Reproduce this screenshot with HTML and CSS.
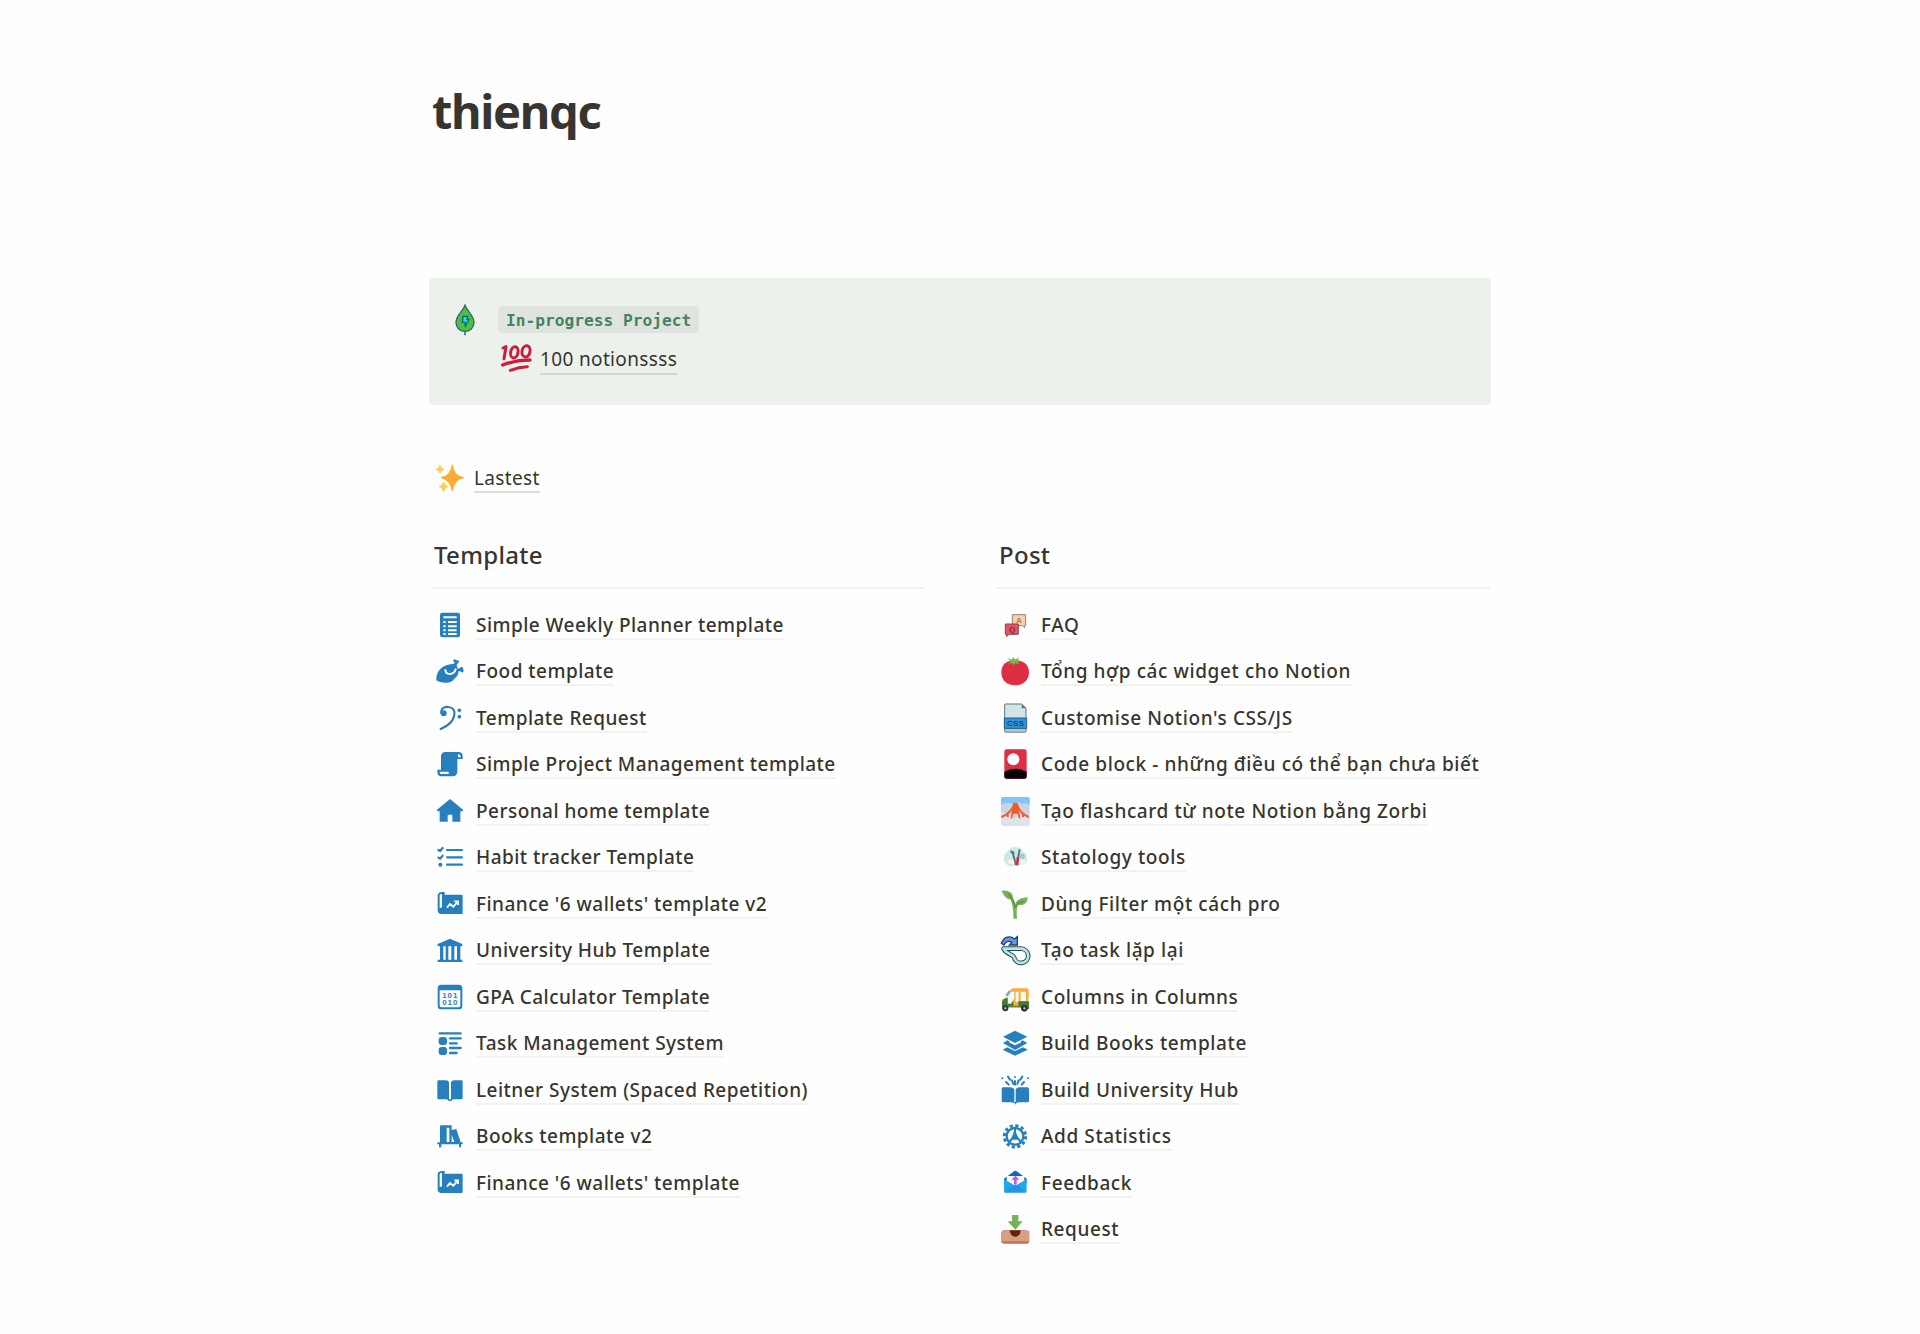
FILE: index.html
```html
<!DOCTYPE html>
<html lang="vi">
<head>
<meta charset="utf-8">
<title>thienqc</title>
<link rel="stylesheet" href="styles.css">
</head>
<body>
<main class="page">
  <h1 class="title">thienqc</h1>

  <section class="callout">
    <svg class="callout-icon" viewBox="0 0 84 96"><path d="M42 80V94" stroke="#3d6f8c" stroke-width="5"/><path d="M42 4C36 22 15 34 15 55C15 72 27 82 42 82S69 72 69 55C69 34 48 22 42 4Z" fill="#4bc13c" stroke="#34667e" stroke-width="4"/><path d="M36 37H50L48 46H54L43 66L42 55H34Z" fill="#1ce5e5" stroke="#17607a" stroke-width="4"/></svg>
    <div class="callout-body">
      <code class="tag">In-progress Project</code>
      <a class="item item-project"><svg class="icon icon-hundred" viewBox="0 0 96 96"><g fill="none" stroke="#c91f3c" stroke-width="9" stroke-linecap="round" stroke-linejoin="round"><path d="M6 15L15 11L9 47"/><ellipse cx="40" cy="28" rx="11" ry="17" transform="rotate(12 40 28)"/><ellipse cx="75" cy="25" rx="12" ry="17" transform="rotate(12 75 25)"/><path d="M5 66Q43 51 87 51" stroke-width="10"/><path d="M28 82Q55 72 79 71" stroke-width="9"/></g></svg><span class="label">100 notionssss</span></a>
    </div>
  </section>

  <a class="item item-latest"><svg class="icon" viewBox="0 0 84 84"><path d="M49 2Q53 36 83 41Q53 47 49 81Q43 47 15 41Q44 36 49 2Z" fill="#ffac33" stroke="#ffac33" stroke-width="3" stroke-linejoin="round"/><path d="M12 4Q14 14 24 16Q14 18 12 28Q10 18 0 16Q10 14 12 4ZM23 54Q26 66 36 68Q26 70 23 84Q20 70 9 68Q20 66 23 54Z" fill="#ffcc4d" stroke="#ffcc4d" stroke-width="3"/></svg><span class="label">Lastest</span></a>

  <div class="columns">
    <section class="column">
      <h2 class="heading">Template</h2>
      <nav class="list">
        <a class="item"><svg class="icon blue" viewBox="0 0 84 84"><rect x="12" y="5" width="60" height="74" rx="7"/><path d="M22 19H62M36 33H62M36 46H62M36 58H62M36 69H62M22 33H29M22 46H29M22 58H29M22 69H29" stroke="#fff" stroke-width="6"/></svg><span class="label">Simple Weekly Planner template</span></a>
        <a class="item"><svg class="icon blue" viewBox="0 0 84 84"><path d="M1 70C0 48 12 31 31 25Q45 20 53 20L57 17Q49 11 53 8Q57 5 61 10Q70 8 69 15L62 23L65 35L71 34Q75 28 80 31Q82 34 81 37Q86 42 80 46Q75 47 72 42L68 43Q66 59 54 66Q49 76 34 77Q12 78 1 70Z"/><path d="M28 39Q29 51 41 51Q55 51 59 37" fill="none" stroke="#fff" stroke-width="6" stroke-linecap="round"/></svg><span class="label">Food template</span></a>
        <a class="item"><svg class="icon blue" viewBox="0 0 84 84"><path d="M16 27C14 11 28 8 37 9C52 10 57 20 55 33C52 53 33 67 14 75" fill="none" stroke="#2680bd" stroke-width="6.500" stroke-linecap="round"/><circle cx="23" cy="28" r="9"/><circle cx="70" cy="19" r="5.500"/><circle cx="70" cy="38" r="5.500"/></svg><span class="label">Template Request</span></a>
        <a class="item"><svg class="icon blue" viewBox="0 0 84 84"><path d="M26 6H69Q80 7 80 19V27H64V63Q64 79 50 79H15Q4 78 4 65V59H15V20Q15 8 26 6Z"/><path d="M11 65H38V72H14Q11 70 11 65ZM66 13Q74 13 74 22H66Z" fill="#fff"/></svg><span class="label">Simple Project Management template</span></a>
        <a class="item"><svg class="icon blue" viewBox="0 0 84 84"><path d="M42 6L82 39L79 43H73V74H49V56Q49 53 46 53H38Q35 53 35 56V74H11V43H5L2 39Z"/></svg><span class="label">Personal home template</span></a>
        <a class="item"><svg class="icon" viewBox="0 0 84 84"><g fill="none" stroke="#2680bd" stroke-width="6.500" stroke-linecap="round"><path d="M7 21L12 24L20 15M7 44L12 47L20 38M33 21H78M33 43H78M33 65H78"/></g><circle class="fill-blue" cx="13" cy="65" r="6"/></svg><span class="label">Habit tracker Template</span></a>
        <a class="item"><svg class="icon blue" viewBox="0 0 84 84"><path d="M5 14Q8 5 20 6H26V14H77Q80 14 80 17V69Q80 72 77 72H14Q5 71 5 61Z"/><path d="M11 15Q12 12 18 12V53Q14 52 11 55Z" fill="#fff"/><path d="M33 53L42 42L52 50L64 36M55 34H66V45" fill="none" stroke="#fff" stroke-width="5.500"/></svg><span class="label">Finance '6 wallets' template v2</span></a>
        <a class="item"><svg class="icon blue" viewBox="0 0 84 84"><path d="M42 8L79 24V31H5V24ZM5 71H79V78H5Z"/><path d="M12 30H22V72H12ZM29 30H37V72H29ZM46 30H55V72H46ZM63 30H73V72H63Z"/></svg><span class="label">University Hub Template</span></a>
        <a class="item"><svg class="icon blue" viewBox="0 0 84 84"><rect x="5" y="5" width="74" height="74" rx="11"/><path d="M11 22H73V67Q73 73 67 73H17Q11 73 11 67Z" fill="#fff"/><g class="digits"><text x="43" y="45">101</text><text x="43" y="66">010</text></g></svg><span class="label">GPA Calculator Template</span></a>
        <a class="item"><svg class="icon blue" viewBox="0 0 84 84"><rect x="8" y="24" width="25" height="24" rx="9"/><rect x="8" y="54" width="25" height="24" rx="9"/><path d="M11 13H74M42 28H74M42 43H62M42 57H74M42 72H62" fill="none" stroke="#2680bd" stroke-width="7" stroke-linecap="round"/></svg><span class="label">Task Management System</span></a>
        <a class="item"><svg class="icon blue" viewBox="0 0 84 84"><path d="M8 13H28Q38 13 39 20V73Q34 70 27 70H8Q4 70 4 66V17Q4 13 8 13ZM76 13H56Q46 13 45 20V73Q50 70 57 70H76Q80 70 80 66V17Q80 13 76 13Z"/><path d="M34 70H50Q47 76 42 76Q37 76 34 70Z"/></svg><span class="label">Leitner System (Spaced Repetition)</span></a>
        <a class="item"><svg class="icon blue" viewBox="0 0 84 84"><path d="M15 10H47V24L61 21L74 61H80V67H75V76H69V67H16V76H9V67H4V61H12V14Q12 10 15 10Z"/><path d="M32 17H40V60H32ZM47 38L55 60H47Z" fill="#fff"/></svg><span class="label">Books template v2</span></a>
        <a class="item"><svg class="icon blue" viewBox="0 0 84 84"><path d="M5 14Q8 5 20 6H26V14H77Q80 14 80 17V69Q80 72 77 72H14Q5 71 5 61Z"/><path d="M11 15Q12 12 18 12V53Q14 52 11 55Z" fill="#fff"/><path d="M33 53L42 42L52 50L64 36M55 34H66V45" fill="none" stroke="#fff" stroke-width="5.500"/></svg><span class="label">Finance '6 wallets' template</span></a>
      </nav>
    </section>

    <section class="column column-post">
      <h2 class="heading">Post</h2>
      <nav class="list">
        <a class="item"><svg class="icon" viewBox="0 0 84 84"><path d="M34 11H74V44H71V50L64 44H34Z" fill="#f9cfa9" stroke="#97857a" stroke-width="3"/><path d="M13 39H52V70H25L17 76V70H13Z" fill="#ee4d63" stroke="#7b4b58" stroke-width="3"/><text class="glyph glyph-a" x="54" y="37">A</text><text class="glyph glyph-q" x="33" y="63">Q</text></svg><span class="label">FAQ</span></a>
        <a class="item"><svg class="icon" viewBox="0 0 84 84"><path d="M42 11C67 8 84 24 84 46C84 72 64 85 42 85S1 72 1 46C1 24 17 8 42 11Z" fill="#dd2e44"/><path d="M19 2L32 8L37 0L42 8L54 1L50 10L61 12L51 16L53 23L43 18L36 25L33 18L22 20L29 13Z" fill="#77b255"/></svg><span class="label">Tổng hợp các widget cho Notion</span></a>
        <a class="item"><svg class="icon" viewBox="0 0 84 84"><path d="M12 0H62L75 13V79Q75 84 70 84H16Q11 84 11 79V2Z" fill="#d1e5e7" stroke="#60777b" stroke-width="3"/><path d="M62 0V13H75Z" fill="#60777b"/><path d="M11 74H75V84H11Z" fill="#b2cccb" stroke="#60777b" stroke-width="2"/><path d="M10 42H77V73H10Z" fill="#2e91da" stroke="#2c608b" stroke-width="3"/><text class="glyph glyph-css" x="44" y="66">CSS</text></svg><span class="label">Customise Notion's CSS/JS</span></a>
        <a class="item"><svg class="icon" viewBox="0 0 84 84"><rect x="10" y="-2" width="67" height="88" rx="7" fill="#dd2e44"/><circle cx="37" cy="28" r="18" fill="#fff"/><path d="M10 65Q42 47 77 65V80Q77 86 70 86H17Q10 86 10 80Z" fill="#090204"/></svg><span class="label">Code block - những điều có thể bạn chưa biết</span></a>
        <a class="item"><svg class="icon" viewBox="0 0 84 84"><rect width="86" height="86" rx="7" fill="#c9d5de"/><path d="M0 24V7Q0 0 7 0H79Q86 0 86 7V24Q75 15 64 22Q50 8 35 21Q17 14 0 24Z" fill="#82c4f7"/><path d="M0 46Q20 43 38 65Q53 51 86 55V79Q86 86 79 86H7Q0 86 0 79Z" fill="#dce4e9"/><g fill="none" stroke="#f05a2b"><path d="M1 60Q29 50 40 21M83 60Q57 50 47 21" stroke-width="6"/><path d="M39 24L31 64M48 24L56 64" stroke-width="5"/><path d="M20 51V60M66 51V60" stroke-width="6"/></g><path d="M37 17H50L52 50H35Z" fill="#f05a2b"/></svg><span class="label">Tạo flashcard từ note Notion bằng Zorbi</span></a>
        <a class="item"><svg class="icon" viewBox="0 0 84 84"><path d="M9 42Q10 29 22 25Q30 8 45 13Q60 12 64 25Q81 33 76 45Q83 58 65 64L26 70Q5 60 9 42Z" fill="#c9ebe7"/><path d="M19 60Q18 48 31 49L69 50Q80 55 74 63H27Q21 63 19 60Z" fill="#f8f5ee" stroke="#d5d8ce"/><path d="M34 25L45 66M56 19L51 45M30 23Q32 33 40 28" stroke="#66717b" stroke-width="6" fill="none"/><path d="M51 43L48 67" stroke="#c03545" stroke-width="8"/><circle cx="64" cy="40" r="5" fill="none" stroke="#87959a" stroke-width="3"/></svg><span class="label">Statology tools</span></a>
        <a class="item"><svg class="icon" viewBox="0 0 84 84"><path d="M2 2Q37 0 37 27L43 43Q45 24 81 22Q77 50 53 44Q45 46 48 86H37Q38 50 29 29Q10 25 2 2Z" fill="#77b255"/><path d="M21 13Q39 27 43 53Q48 38 68 34" fill="none" stroke="#5c913b" stroke-width="4"/></svg><span class="label">Dùng Filter một cách pro</span></a>
        <a class="item"><svg class="icon" viewBox="0 0 84 84"><g fill="none" stroke-linecap="round" stroke-linejoin="round"><path d="M8 38H60A21.500 21.500 0 1 1 39 64C37 54 20 58 8 39" stroke="#37474f" stroke-width="14"/><path d="M8 38H60A21.500 21.500 0 1 1 39 64C37 54 20 58 8 39" stroke="#aee9f2" stroke-width="8"/></g><path d="M1 22C9 1 28 -2 40 9L49 2V27H25L32 19C24 14 13 16 9 27Z" fill="#6895ed" stroke="#243e70" stroke-width="4"/></svg><span class="label">Tạo task lặp lại</span></a>
        <a class="item"><svg class="icon" viewBox="0 0 84 84"><path d="M20 41L27 22Q31 15 40 16H80Q85 22 83 41L78 75H12L3 64V50Z" fill="#ffab35"/><path d="M27 26H40V44L33 69H20V45ZM44 26H53V57H44ZM59 26H75V54H59Z" fill="#f4faf9"/><path d="M3 57Q7 43 20 46V62H30L37 51V68H52V55H84V78H64L57 71H23L19 78H3Z" fill="#427b32"/><path d="M16 38L27 24" stroke="#5dadec" stroke-width="7"/><circle cx="13" cy="76" r="9" fill="#31373d"/><circle cx="70" cy="76" r="10" fill="#31373d"/><circle cx="13" cy="76" r="3" fill="#ccd6dd"/><circle cx="70" cy="76" r="3" fill="#ccd6dd"/></svg><span class="label">Columns in Columns</span></a>
        <a class="item"><svg class="icon blue" viewBox="0 0 84 84"><path d="M42 5L79 23L42 42L6 23ZM42 80L5 62L19 55L42 66L66 55L80 62Z"/><path d="M6 42L19 34L42 47L65 34L79 42L42 63Z"/><path d="M26 38L42 46L59 38" fill="none" stroke="#fff" stroke-width="5"/></svg><span class="label">Build Books template</span></a>
        <a class="item"><svg class="icon blue" viewBox="0 0 84 84"><path d="M6 34H29Q37 35 40 40V81L31 79H7Q2 79 2 75V39Q2 34 6 34ZM78 34H55Q47 35 44 40V81L53 79H77Q84 79 84 75V39Q84 34 78 34Z"/><path d="M39 78H47L43 86Z"/><g fill="none" stroke="#2680bd" stroke-width="6" stroke-linecap="round"><path d="M42 15V26M21 2L27 11M64 2L58 11M15 18L23 26M69 18L62 26M33 13L37 24M53 13L49 24"/></g><circle cx="4" cy="7" r="3"/><circle cx="81" cy="7" r="3"/><circle cx="42" cy="3" r="3"/></svg><span class="label">Build University Hub</span></a>
        <a class="item"><svg class="icon" viewBox="0 0 84 84"><g fill="none" stroke="#2680bd"><circle cx="42" cy="43" r="32" stroke-width="9" stroke-dasharray="9.500 7.255"/><circle cx="42" cy="43" r="25" stroke-width="7"/><path d="M42 19V39L25 60M42 39L60 60" stroke-width="6"/></g><path class="fill-blue" d="M41 21L54 53H30Z"/></svg><span class="label">Add Statistics</span></a>
        <a class="item"><svg class="icon" viewBox="0 0 84 84"><path d="M9 29L39 7Q43 4 47 7L77 29V41H9Z" fill="#096bc3"/><path d="M17 21H70V53H17Z" fill="#f5f8ff"/><path d="M9 31L43 50L77 31V67Q77 71 73 71H13Q9 71 9 67Z" fill="#20a8ec"/><path d="M10 70L43 46L76 70Z" fill="#2495e5"/><path d="M43 20L55 32H47V46H39V32H31Z" fill="#be58e7"/></svg><span class="label">Feedback</span></a>
        <a class="item"><svg class="icon" viewBox="0 0 84 84"><path d="M8 46H77L85 54V78Q85 86 77 86H9Q1 86 1 78V52Z" fill="#bd705a"/><path d="M2 47H84V79H2Z" fill="#d99e82"/><path d="M26 46H59Q58 65 43 65Q28 65 26 46Z" fill="#662113"/><path d="M33 0H52V19H65L43 44L20 19H33Z" fill="#77b255"/></svg><span class="label">Request</span></a>
      </nav>
    </section>
  </div>
</main>
</body>
</html>
```
FILE: styles.css
```css
* { box-sizing: border-box; }

body {
  margin: 0;
  background: #fefefe;
  color: #37352f;
  font-family: "Noto Sans", "Open Sans", sans-serif;
}

.page {
  width: 1062px;
  height: 1334px;
  margin: 0 auto;
  padding-top: 78px;
}

.title {
  height: 66px;
  margin: 0 0 134px;
  padding-left: 3px;
  font-size: 47px;
  font-weight: 700;
  line-height: 66px;
  letter-spacing: -1.3px;
}

.callout {
  display: flex;
  gap: 19px;
  height: 127px;
  padding: 26px 22px;
  border-radius: 4px;
  background: #ecf1ec;
}

.callout-icon { width: 28px; height: 32px; }

.callout-body {
  display: flex;
  flex-direction: column;
  align-items: flex-start;
  padding-top: 2px;
}

.tag {
  flex: none;
  height: 27px;
  padding: 0 8px;
  border-radius: 4px;
  background: #dfe4de;
  color: #448361;
  font: 700 16.2px/29px "DejaVu Sans Mono", monospace;
}

.item {
  display: flex;
  align-items: center;
  height: 46.5px;
  padding-left: 5px;
  white-space: nowrap;
}

.icon {
  flex: none;
  width: 28px;
  height: 28px;
  margin-right: 12px;
  overflow: visible;
}

.blue, .fill-blue { fill: #2680bd; }

.label {
  height: 30px;
  border-bottom: 2px solid #f2f2f2;
  font-size: 19px;
  font-weight: 500;
  line-height: 30px;
  letter-spacing: 0.47px;
}

.column-post .label { letter-spacing: 0.6px; }

.item-project {
  flex: none;
  height: 50px;
  margin-top: 1px;
  padding-left: 3px;
}
.item-project .label {
  height: 32px;
  border-color: #d2d7d2;
  font-weight: 400;
  line-height: 33px;
  letter-spacing: 0.35px;
}
.icon-hundred { width: 32px; height: 32px; margin-right: 7px; }

.item-latest { margin-top: 50px; padding-left: 7px; }
.item-latest .icon { margin-right: 10px; }
.item-latest .label {
  border-color: #dddddc;
  font-weight: 400;
  line-height: 31px;
  letter-spacing: 0.35px;
}

.columns {
  display: grid;
  grid-template-columns: 494px 494px;
  column-gap: 71px;
  padding: 21px 0 0 2px;
}

.heading {
  height: 66px;
  margin: 0 0 12.9px;
  padding-left: 3px;
  border-bottom: 2px solid #f1f1f1;
  font-size: 24px;
  font-weight: 500;
  line-height: 64px;
  letter-spacing: 0.3px;
}

.digits {
  font: 700 24px "Liberation Sans", sans-serif;
  letter-spacing: 3px;
  text-anchor: middle;
}

.glyph {
  font: 700 24px "Liberation Sans", sans-serif;
  text-anchor: middle;
}

.glyph-a { fill: #97857a; }
.glyph-q { fill: #7b3045; }
.glyph-css { fill: #23496c; letter-spacing: 1px; }
```
